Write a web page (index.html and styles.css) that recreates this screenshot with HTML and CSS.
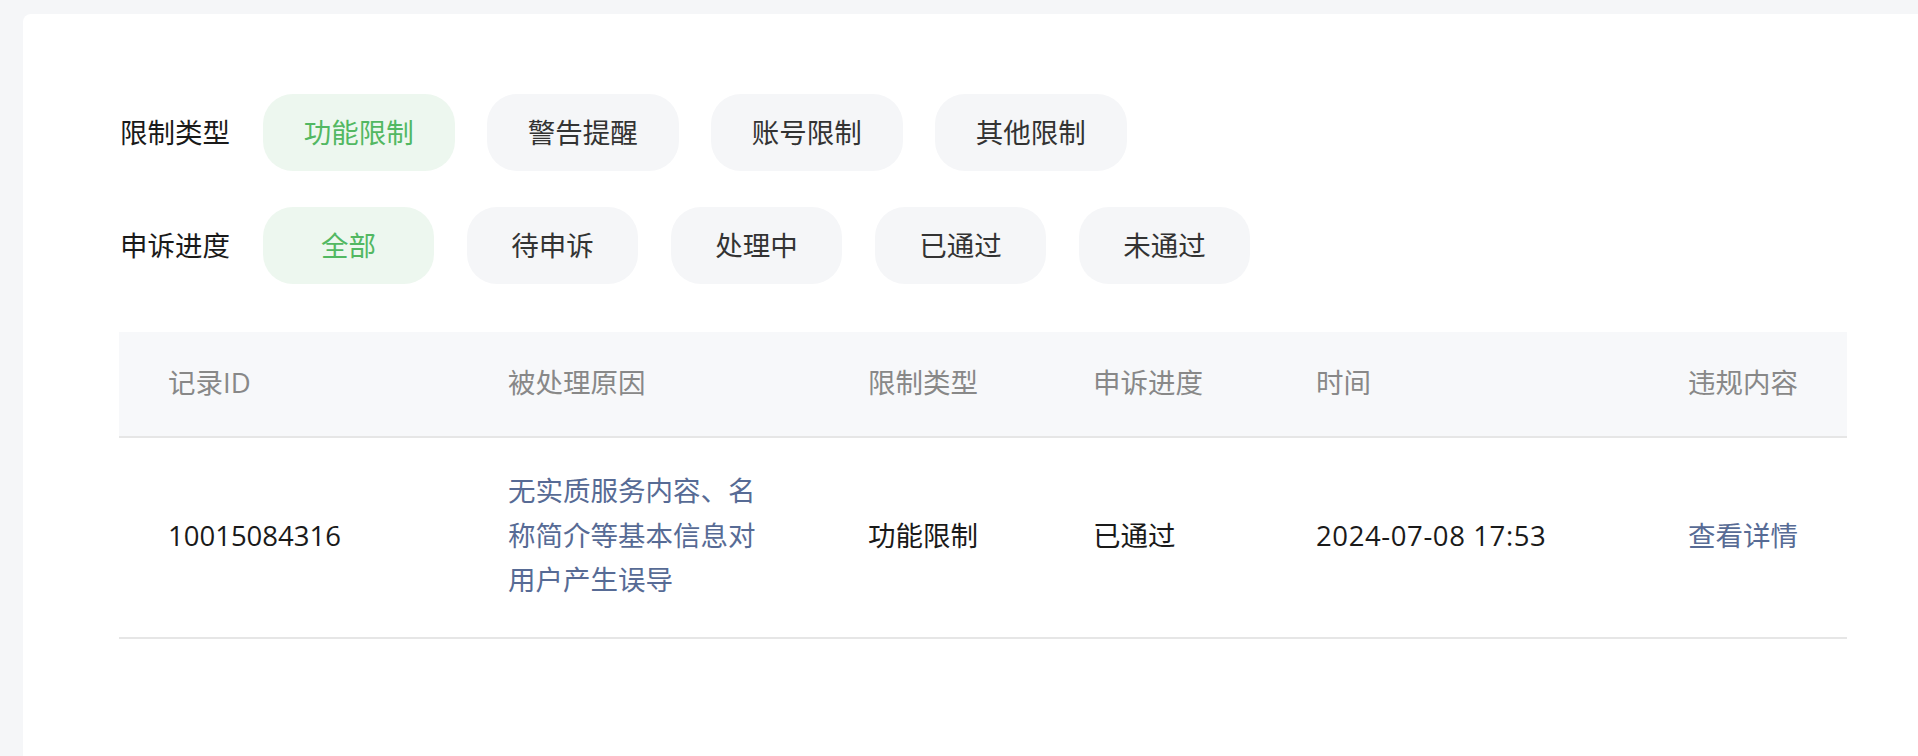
FILE: index.html
```html
<!DOCTYPE html>
<html lang="zh-CN">
<head>
<meta charset="utf-8">
<title>违规记录</title>
<link rel="stylesheet" href="styles.css">
</head>
<body>
<main class="card">
  <div class="filter-row">
    <span class="filter-label">限制类型</span>
    <div class="pills pills-wide">
      <span class="pill pill-active">功能限制</span>
      <span class="pill">警告提醒</span>
      <span class="pill">账号限制</span>
      <span class="pill">其他限制</span>
    </div>
  </div>
  <div class="filter-row">
    <span class="filter-label">申诉进度</span>
    <div class="pills">
      <span class="pill pill-active">全部</span>
      <span class="pill">待申诉</span>
      <span class="pill">处理中</span>
      <span class="pill">已通过</span>
      <span class="pill">未通过</span>
    </div>
  </div>

  <table class="records">
    <colgroup>
      <col class="c1"><col class="c2"><col class="c3"><col class="c4"><col class="c5"><col class="c6">
    </colgroup>
    <thead>
      <tr>
        <th>记录ID</th>
        <th>被处理原因</th>
        <th>限制类型</th>
        <th>申诉进度</th>
        <th>时间</th>
        <th>违规内容</th>
      </tr>
    </thead>
    <tbody>
      <tr>
        <td>10015084316</td>
        <td class="link">无实质服务内容、名称简介等基本信息对用户产生误导</td>
        <td>功能限制</td>
        <td>已通过</td>
        <td class="time">2024-07-08 17:53</td>
        <td class="link">查看详情</td>
      </tr>
    </tbody>
  </table>
</main>
</body>
</html>
```

FILE: styles.css
```css
html, body {
  margin: 0;
  padding: 0;
}

body {
  background: #f5f6f8;
  padding-top: 14px;
  overflow: hidden;
  font-family: "Open Sans", "Noto Sans CJK SC", sans-serif;
  font-size: 27.5px;
  color: #1a1a1a;
}

.card {
  background: #ffffff;
  border-radius: 8px 8px 0 0;
  margin-left: 23px;
  margin-right: -25px;
  padding: 80px 96px 0 97px;
  min-height: 800px;
  box-sizing: border-box;
}

.filter-row {
  display: flex;
  align-items: center;
  margin-bottom: 36px;
}

.filter-label {
  width: 110px;
  margin-right: 33px;
  white-space: nowrap;
  color: #1a1a1a;
  line-height: 1;
}

.pills {
  display: flex;
  gap: 33px;
}

.pills-wide {
  gap: 32.5px;
}

.pill {
  display: inline-flex;
  align-items: center;
  justify-content: center;
  box-sizing: border-box;
  height: 77px;
  min-width: 171px;
  padding: 0 40.75px;
  border-radius: 30px;
  background: #f5f6f8;
  color: #333333;
  white-space: nowrap;
  line-height: 1;
}

.pill-active {
  background: #edf7ef;
  color: #52b862;
}

.records {
  margin-top: 48px;
  margin-left: -1px;
  width: 1728px;
  border-collapse: collapse;
  table-layout: fixed;
}

.records col.c1 { width: 341px; }
.records col.c2 { width: 360px; }
.records col.c3 { width: 225px; }
.records col.c4 { width: 223px; }
.records col.c5 { width: 372px; }
.records col.c6 { width: 207px; }

.records th {
  background: #f7f8fa;
  color: #888888;
  font-weight: normal;
  text-align: left;
  height: 102px;
  padding: 0 48px 2px 48px;
  border-bottom: 2px solid #e6e6e6;
  line-height: 1;
  white-space: nowrap;
}

.records td {
  padding: 31px 48px 34px 48px;
  border-bottom: 2px solid #e6e6e6;
  line-height: 44.5px;
  vertical-align: middle;
  color: #1a1a1a;
  white-space: nowrap;
}

.records td.time {
  letter-spacing: 0.6px;
}

.records th:first-child,
.records td:first-child {
  padding-left: 49px;
}

.records th:last-child,
.records td:last-child {
  padding-right: 0;
}

.records td.link {
  color: #576b95;
  white-space: normal;
}
```
